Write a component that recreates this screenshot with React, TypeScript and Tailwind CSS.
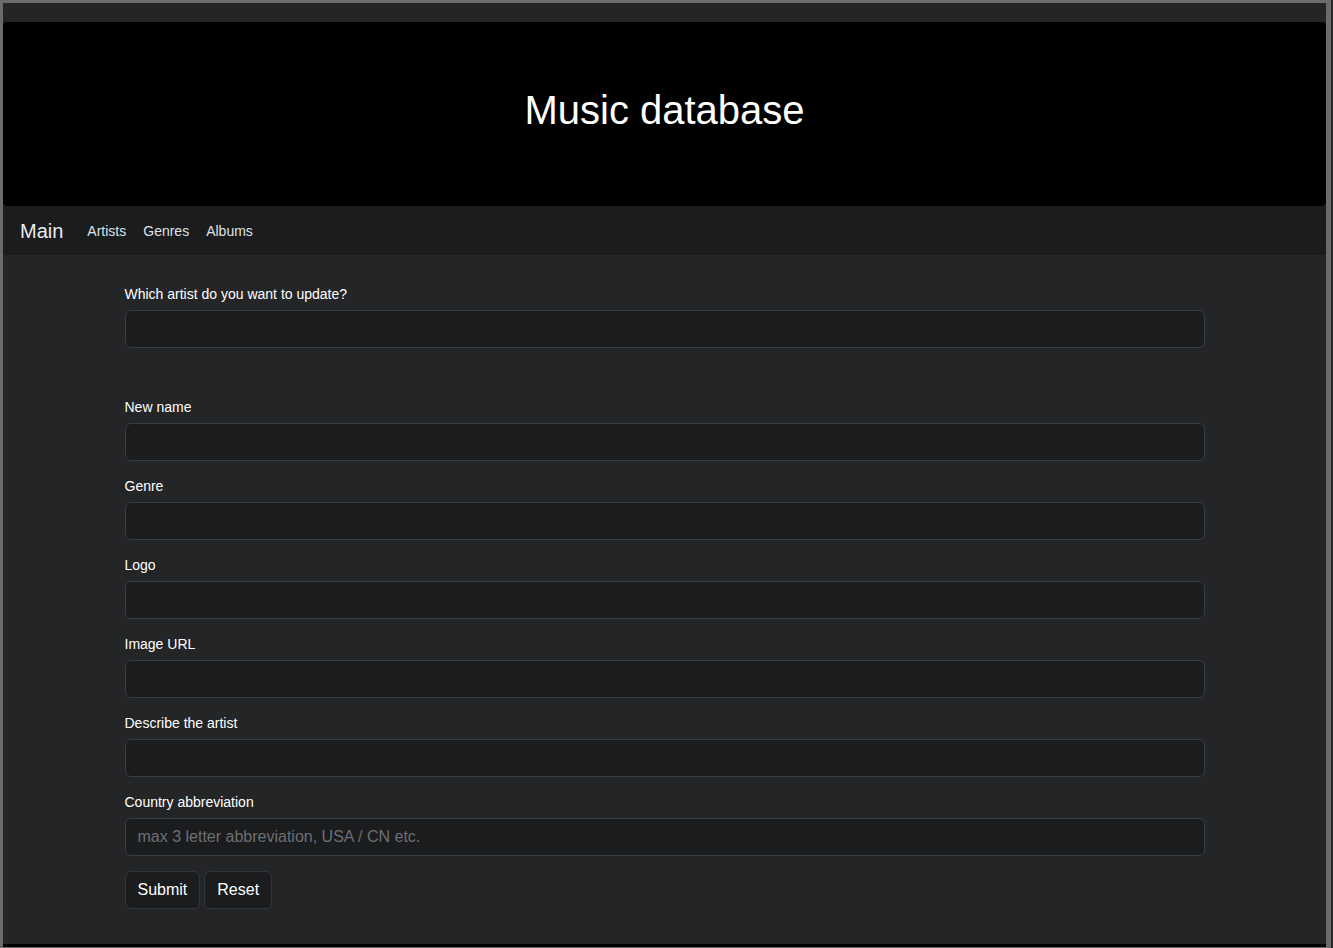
import React from 'react';

const fields = [
  { label: 'New name' },
  { label: 'Genre' },
  { label: 'Logo' },
  { label: 'Image URL' },
  { label: 'Describe the artist' },
  { label: 'Country abbreviation', placeholder: 'max 3 letter abbreviation, USA / CN etc.' },
];

const inputClass =
  'block w-full h-[38px] rounded-[6px] border border-[#383c43] bg-[#1b1c1e] px-3 text-base text-white placeholder:text-[#6c6f73] outline-none';

const Field: React.FC<{ label: string; placeholder?: string; className?: string }> = ({
  label,
  placeholder,
  className = 'mb-[15px]',
}) => (
  <div className={className}>
    <label className="block mb-[5px] text-sm leading-[21px] text-white">{label}</label>
    <input type="text" placeholder={placeholder} className={inputClass} />
  </div>
);

export default function App() {
  return (
    <div
      className="min-h-[948px] bg-[#6b6b6b] pt-[3px] pl-[3px] pr-[5px] border-r-2 border-[#2a2a2a]"
      style={{ fontFamily: '"Liberation Sans", Arial, sans-serif' }}
    >
      <div className="bg-[#242527] pt-[19px]">
        {/* Header */}
        <div className="h-[184px] rounded bg-black flex items-center justify-center pb-2">
          <h1 className="text-[40px] text-white">Music database</h1>
        </div>

        {/* Nav */}
        <nav className="h-[49px] bg-[#1b1c1e] flex items-center pl-[17px]">
          <span className="text-[20px] text-[#e9ebee] mr-6">Main</span>
          <div className="flex gap-[17px] text-sm text-[#dee2e6]">
            <span>Artists</span>
            <span>Genres</span>
            <span>Albums</span>
          </div>
        </nav>

        {/* Form */}
        <div className="w-[1080px] mx-auto pt-[29px] pb-[35px]">
          <Field label="Which artist do you want to update?" className="mb-[49px]" />
          {fields.map((f) => (
            <Field key={f.label} label={f.label} placeholder={f.placeholder} />
          ))}
          <div className="flex gap-1 mt-[1px]">
            <button className="h-[38px] px-3 rounded-[6px] border border-[#32353a] bg-[#1b1c1e] text-base text-white">
              Submit
            </button>
            <button className="h-[38px] px-3 rounded-[6px] border border-[#32353a] bg-[#1b1c1e] text-base text-white">
              Reset
            </button>
          </div>
        </div>
        <div className="h-[3px] bg-black" />
      </div>
    </div>
  );
}
